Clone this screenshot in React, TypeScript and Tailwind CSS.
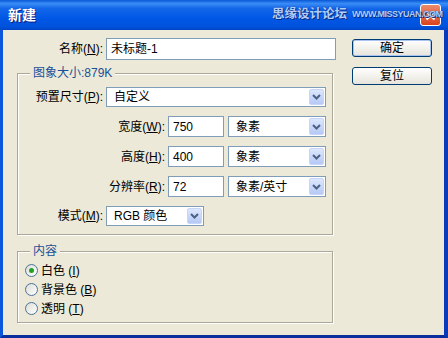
import React from "react";

const Key = ({ text, k }: { text: string; k: string }) => (
  <>
    {text}(<span className="underline">{k}</span>):
  </>
);

const Arrow = () => (
  <span className="flex h-full w-[15px] items-center justify-center rounded-[2px] border border-[#c6d5fb] bg-gradient-to-b from-[#dde7fe] to-[#b6c9f5]">
    <svg width="9" height="6" viewBox="0 0 9 6">
      <path d="M1 1 L4.5 4.5 L8 1" stroke="#4d6185" strokeWidth="2" fill="none" />
    </svg>
  </span>
);

const Select = ({ value, className }: { value: string; className: string }) => (
  <div className={`flex items-center border border-[#7f9db9] bg-white p-[1px] ${className}`}>
    <span className="flex-1 pl-[6px] leading-none">{value}</span>
    <Arrow />
  </div>
);

const Field = ({ value, className }: { value: string; className: string }) => (
  <div className={`flex items-center border border-[#7f9db9] bg-white pl-[4px] leading-none ${className}`}>
    {value}
  </div>
);

const Legend = ({ children }: { children: React.ReactNode }) => (
  <div className="-mt-[8px] ml-[12px] h-[14px] w-fit bg-[#ece9d8] px-[3px] leading-[14px] text-[#1a4f98]">
    {children}
  </div>
);

const Radio = ({ checked, text, k }: { checked?: boolean; text: string; k: string }) => (
  <div className="flex h-[19px] items-center gap-[3px] pl-[7px]">
    <span className="flex h-[13px] w-[13px] items-center justify-center rounded-full border border-[#4d7296] bg-gradient-to-br from-[#dcdcd7] to-white">
      {checked && <span className="h-[5px] w-[5px] rounded-full bg-[#21a121]" />}
    </span>
    <span className="leading-none">
      {text} (<span className="underline">{k}</span>)
    </span>
  </div>
);

const UnitRow = ({ label, k, value, unit }: { label: string; k: string; value: string; unit: string }) => (
  <div className="mt-[9px] flex items-center">
    <div className="w-[147px] text-right leading-none">
      <Key text={label} k={k} />
    </div>
    <Field value={value} className="ml-[3px] h-[21px] w-[56px]" />
    <Select value={unit} className="ml-[4px] h-[21px] w-[98px]" />
  </div>
);

export default function App() {
  return (
    <div className="relative flex h-[338px] w-[448px] flex-col overflow-hidden text-[12px] text-black font-['Liberation_Sans','Noto_Sans_CJK_SC',sans-serif]">
      <div className="flex h-[30px] items-center justify-between bg-[linear-gradient(180deg,#0a58d6_0%,#3a8cf6_12%,#1466e8_28%,#0058e6_60%,#0052dc_88%,#0046c4_100%)] pl-[8px] pr-[7px]">
        <span className="text-[14px] font-bold text-white [text-shadow:1px_1px_0_#0a1a80]">新建</span>
        <div className="flex h-[22px] w-[21px] items-center justify-center rounded-[3px] border border-white bg-gradient-to-b from-[#e98a6c] to-[#d9421c]">
          <svg width="11" height="11" viewBox="0 0 11 11">
            <path d="M1.5 1.5 L9.5 9.5 M9.5 1.5 L1.5 9.5" stroke="white" strokeWidth="2.2" />
          </svg>
        </div>
      </div>

      <div className="absolute left-[272px] top-[8px] flex w-[172px] items-center gap-[5px] whitespace-nowrap text-[#b0cdf8] [text-shadow:0_0_1px_#0a2f8a,1px_1px_0_#0a2f8a]">
        <span className="text-[12.5px] font-bold leading-none">思缘设计论坛</span>
        <span className="text-[9px] font-bold leading-none tracking-[-0.5px]">WWW.MISSYUAN.COM</span>
      </div>

      <div className="flex flex-1 border-b-[3px] border-l-[3px] border-r-[4px] border-b-[#0a2f9c] border-l-[#0b57dc] border-r-[#0a3ab8] bg-[#ece9d8]">
        <div className="flex w-[333px] flex-col pt-[8px]">
          <div className="flex h-[22px] items-center">
            <div className="w-[100px] text-right leading-none">
              <Key text="名称" k="N" />
            </div>
            <Field value="未标题-1" className="ml-[3px] h-[22px] w-[230px]" />
          </div>

          <div className="ml-[14px] mt-[13px] flex w-[316px] flex-col border border-[#aca899] pb-[8px] shadow-[inset_1px_1px_0_#fff,1px_1px_0_#fff]">
            <Legend>图象大小:879K</Legend>
            <div className="mt-[7px] flex items-center">
              <div className="w-[85px] text-right leading-none">
                <Key text="预置尺寸" k="P" />
              </div>
              <Select value="自定义" className="ml-[3px] h-[20px] w-[220px]" />
            </div>
            <UnitRow label="宽度" k="W" value="750" unit="象素" />
            <UnitRow label="高度" k="H" value="400" unit="象素" />
            <UnitRow label="分辨率" k="R" value="72" unit="象素/英寸" />
            <div className="mt-[9px] flex items-center">
              <div className="w-[85px] text-right leading-none">
                <Key text="模式" k="M" />
              </div>
              <Select value="RGB 颜色" className="ml-[3px] h-[20px] w-[98px]" />
            </div>
          </div>

          <div className="ml-[14px] mt-[16px] flex w-[316px] flex-col border border-[#aca899] pb-[4px] shadow-[inset_1px_1px_0_#fff,1px_1px_0_#fff]">
            <Legend>内容</Legend>
            <div className="mt-[3px] flex flex-col">
              <Radio checked text="白色" k="I" />
              <Radio text="背景色" k="B" />
              <Radio text="透明" k="T" />
            </div>
          </div>
        </div>

        <div className="ml-[16px] flex w-[80px] flex-col gap-[10px] pt-[9px]">
          <button className="h-[18px] rounded-[3px] border border-[#003c74] bg-gradient-to-b from-white to-[#e6e4da] leading-none shadow-[inset_0_0_0_1px_#a9c4f0]">
            确定
          </button>
          <button className="h-[18px] rounded-[3px] border border-[#003c74] bg-gradient-to-b from-white to-[#e6e4da] leading-none">
            复位
          </button>
        </div>
      </div>
    </div>
  );
}
